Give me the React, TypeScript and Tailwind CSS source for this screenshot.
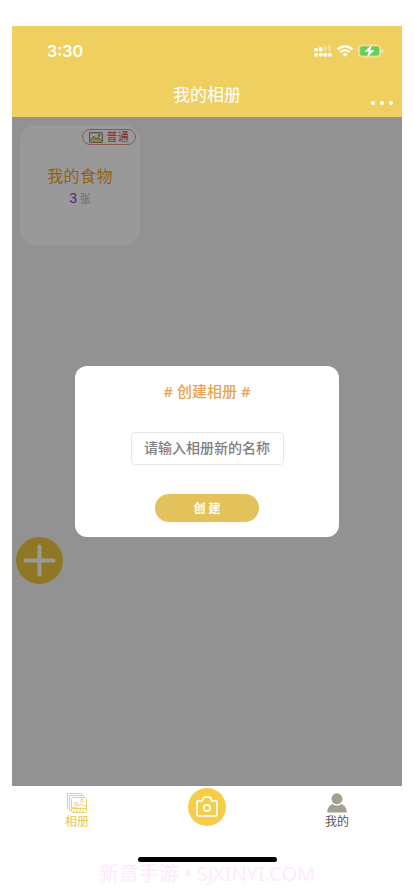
import { useState } from "react";

function SignalIcon() {
  return (
    <svg width="18" height="12" viewBox="0 0 18 12" fill="#fff">
      <rect x="0.400" y="3" width="3.400" height="3.400" rx="1" />
      <rect x="5" y="2" width="3.400" height="4.400" rx="1" />
      <rect x="9.500" y="0.500" width="3.200" height="5.900" rx="1" opacity=".3" />
      <rect x="14" y="0" width="3.200" height="6.400" rx="1" opacity=".3" />
      <rect x="0.400" y="8" width="3.600" height="3.600" rx="1.200" />
      <rect x="5" y="8" width="3.600" height="3.600" rx="1.200" />
      <rect x="9.500" y="8" width="3.600" height="3.600" rx="1.200" />
      <rect x="14" y="8" width="3.600" height="3.600" rx="1.200" />
    </svg>
  );
}

function WifiIcon() {
  return (
    <svg width="16" height="12" viewBox="0 0 16 12" fill="none" stroke="#fff" strokeWidth="2.200">
      <path d="M0.800 4.400c4-4 10.400-4 14.400 0" />
      <path d="M3.200 7.200c2.700-2.600 6.900-2.600 9.600 0" />
      <path d="M5.400 9.200c1.500-1.300 3.700-1.300 5.200 0L8 11.800z" fill="#fff" stroke="none" />
    </svg>
  );
}

function BatteryIcon() {
  return (
    <svg width="26" height="14" viewBox="0 0 26 14">
      <rect x="0.600" y="1" width="22" height="12" rx="3.500" fill="none" stroke="#fff" strokeOpacity=".5" />
      <rect x="2.200" y="2.500" width="18.800" height="9" rx="2" fill="#5fd15c" />
      <path d="M24 5v4c1-.3 1.500-1.100 1.500-2S25 5.300 24 5z" fill="#fff" opacity=".5" />
      <path d="M14 0.500L6.500 7.800h4.200L9 13.500l7.500-7.300h-4.200z" fill="#fff" />
    </svg>
  );
}

function PictureIcon() {
  return (
    <svg width="14" height="11" viewBox="0 0 14 11">
      <rect x="0.600" y="0.600" width="12.800" height="9.800" rx="1" fill="none" stroke="#8f8c80" strokeWidth="1.200" />
      <path d="M1.500 9.500l3.300-4.700 2.400 2.700 2-2 3.300 4z" fill="#f5cc40" />
      <path d="M1.500 8.200l3.300-4 2.400 2.900 2-1.900 3.300 3.300" fill="none" stroke="#77746a" />
      <circle cx="10.200" cy="3.200" r="1.200" fill="#f5cc40" stroke="#77756c" strokeWidth=".6" />
    </svg>
  );
}

function AlbumIcon() {
  return (
    <svg width="20" height="20" viewBox="0 0 20 20" fill="none" stroke="#ecd36e">
      <path d="M1.500 15.500h-1v-15h14v1.500" />
      <path d="M3.500 17.500h-1v-15h14v1.500" />
      <rect x="4.500" y="4.500" width="15" height="15" rx="1" />
      <circle cx="15" cy="7.600" r="1.400" />
      <circle cx="8.800" cy="11" r="1.600" />
      <path d="M4.500 13.500c2 2 5 1.500 6.500-.5 1.500-2.200 3.500-2.400 5-.8q1.500 1.500 3.500.8M4.500 15.500h15M6 19l2.500-3.500M9 19l2.500-3.500M12 19l2.500-3.500M15 19l2.500-3.500" />
    </svg>
  );
}

function CameraIcon() {
  return (
    <svg width="22" height="22" viewBox="0 0 22 22" fill="none" stroke="#fff" strokeWidth="1.700" strokeLinejoin="round">
      <path d="M2.500 4.800h3.700l1.300-2.900q.4-.7 1.200-.7h4.600q.8 0 1.200.7l1.300 2.900h3.700q1.500 0 1.500 1.500v12.200q0 1.500-1.500 1.500h-17q-1.500 0-1.500-1.500V6.300q0-1.500 1.500-1.500z" />
      <circle cx="11" cy="12" r="3.200" />
    </svg>
  );
}

function UserIcon() {
  return (
    <svg width="20" height="20" viewBox="0 0 20 20" fill="#a3a092">
      <circle cx="10" cy="5.800" r="5.500" />
      <path d="M0.300 19.600c0-4.200 2-7.400 5.300-8.500 2.500 2 6.300 2 8.800 0 3.300 1.100 5.300 4.300 5.300 8.500z" />
    </svg>
  );
}

export default function App() {
  const [name, setName] = useState("");

  return (
    <div className="flex min-h-screen flex-col bg-white px-3 pt-[26px] font-['Noto_Sans','Noto_Sans_CJK_SC',sans-serif]">
      <header className="flex h-[91px] flex-col bg-[#efcf60] text-white">
        <div className="flex items-center justify-between pt-[13px] pr-[18px] pl-[35px]">
          <span className="font-['Inter',sans-serif] text-base leading-6 font-semibold">3:30</span>
          <div className="flex items-center gap-[5px]">
            <SignalIcon />
            <WifiIcon />
            <BatteryIcon />
          </div>
        </div>
        <div className="grid grid-cols-[1fr_auto_1fr] items-center pt-5">
          <h1 className="col-start-2 text-[17px] leading-6">我的相册</h1>
          <button aria-label="更多" className="mt-4 mr-[9px] flex items-center gap-[5px] justify-self-end">
            <span className="size-1 rounded-full bg-white" />
            <span className="size-1 rounded-full bg-white" />
            <span className="size-1 rounded-full bg-white" />
          </button>
        </div>
      </header>

      <main className="relative flex-1 bg-[#f3f3f3] p-2">
        <section className="flex size-[120px] flex-col items-center rounded-2xl bg-white pt-1">
          <div className="mr-1 flex h-4 items-center gap-[3px] self-end rounded-full border border-[#e8958c] px-[6px] text-[11px] leading-3 tracking-wide text-[#d8524a]">
            <PictureIcon />
            <span>普通</span>
          </div>
          <h2 className="mt-[19px] text-base leading-6 tracking-wide text-[#f5a31c]">我的食物</h2>
          <p className="text-[11px] leading-4 text-[#b5b5b5]">
            <span className="font-['Liberation_Sans',sans-serif] text-sm text-[#8440e6]">3</span> 张
          </p>
        </section>

        <button
          aria-label="添加相册"
          className="absolute bottom-[202px] left-1 flex size-[47px] items-center justify-center rounded-full bg-[#eec63c]"
        >
          <svg width="33" height="33" viewBox="0 0 33 33" stroke="#fff" strokeWidth="4" strokeLinecap="round">
            <path d="M16.500 2.500v28M2.500 16.500h28" />
          </svg>
        </button>

        {/* Fenêtre de création */}
        <div className="absolute inset-0 flex items-center justify-center bg-black/40">
          <form
            role="dialog"
            aria-labelledby="titre"
            onSubmit={(e) => e.preventDefault()}
            className="flex w-[264px] flex-col items-center rounded-xl bg-white pt-[13px] pb-[15px]"
          >
            <h2 id="titre" className="text-[15px] leading-6 font-medium text-[#e5a550]"># 创建相册 #</h2>
            <input
              aria-label="相册名称"
              value={name}
              onChange={(e) => setName(e.target.value)}
              placeholder="请输入相册新的名称"
              className="mt-[29px] h-[33px] w-[153px] rounded-[4px] border border-[#e6e6e6] pb-[3px] text-center text-sm font-medium placeholder:text-[#808080]"
            />
            <button type="submit" className="mt-[29px] h-7 w-[104px] rounded-full bg-[#e4c25b] pt-px text-xs font-bold text-white">
              创 建
            </button>
          </form>
        </div>
      </main>

      <footer className="flex h-[110px] flex-col">
        <nav className="grid grid-cols-3 text-xs leading-4">
          <a href="#album" className="flex flex-col items-center gap-px pt-[7px] text-[#e9c746]">
            <AlbumIcon />
            相册
          </a>
          <a href="#camera" aria-label="拍照" className="mt-[2px] flex size-[38px] items-center justify-center justify-self-center rounded-full bg-[#f6cd48]">
            <CameraIcon />
          </a>
          <a href="#me" className="flex flex-col items-center gap-px pt-[7px] text-[#555]">
            <UserIcon />
            我的
          </a>
        </nav>
        <div className="mt-[27px] h-[5px] w-[139px] self-center rounded-full bg-black" />
        <p className="self-center text-xl leading-6 whitespace-nowrap text-[#ffe9fd]">新意手游 • SJXINYI.COM</p>
      </footer>
    </div>
  );
}
